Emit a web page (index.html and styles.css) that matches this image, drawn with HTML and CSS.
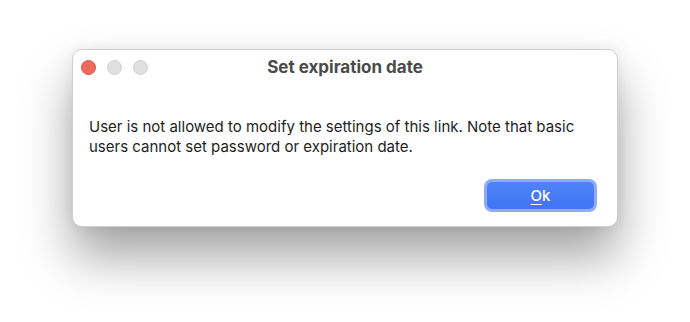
FILE: index.html
```html
<!DOCTYPE html>
<html lang="en">
<head>
    <meta charset="utf-8" />
    <link rel="stylesheet" href="styles.css">
    <title>Set expiration date</title>
</head>
<body>
<div class="window">
    <div class="titlebar">
        <div class="lights">
            <span class="light close"></span>
            <span class="light"></span>
            <span class="light"></span>
        </div>
        <div class="title">Set expiration date</div>
        <div></div>
    </div>
    <div class="content">
        <p class="message">User is not allowed to modify the settings of this link. Note that basic users cannot set password or expiration date.</p>
        <div class="actions">
            <button class="btn-ok"><u>O</u>k</button>
        </div>
    </div>
</div>
</body>
</html>
```

FILE: styles.css
```css
*{margin:0;padding:0;box-sizing:border-box;}
html,body{height:100%;}
body{background:#fff;font:15px/20px Inter, "Liberation Sans", sans-serif;color:#1e1e1e;overflow:hidden;padding:49px 0 0 72px;}
.window{width:546px;height:178px;background:#fff;border:1px solid #cfcfcf;border-radius:10px;box-shadow:0 30px 50px rgba(0,0,0,0.36), 0 0 14px rgba(0,0,0,0.07);display:flex;flex-direction:column;}
.titlebar{height:34px;display:grid;grid-template-columns:1fr auto 1fr;align-items:center;}
.lights{display:flex;gap:11px;padding-left:8px;}
.light{width:15px;height:15px;border-radius:50%;background:#e0e0e0;border:1px solid #d0d0d0;}
.light.close{background:#ed6a5e;border-color:#d7574c;}
.title{font-weight:700;font-size:17px;color:#4a4a4a;}
.content{padding:33px 20px 0 16px;flex:1;display:flex;flex-direction:column;}
.message{width:505px;}
.actions{display:flex;justify-content:flex-end;margin-top:22px;}
.btn-ok{width:113px;height:33px;border:3px solid #8eabf6;border-radius:8px;background:linear-gradient(#4f84f8,#3f74f3);color:#fff;font:500 15px/27px Inter, "Liberation Sans", sans-serif;text-align:center;}
.btn-ok u{text-decoration-thickness:1px;text-underline-offset:3px;}
```
